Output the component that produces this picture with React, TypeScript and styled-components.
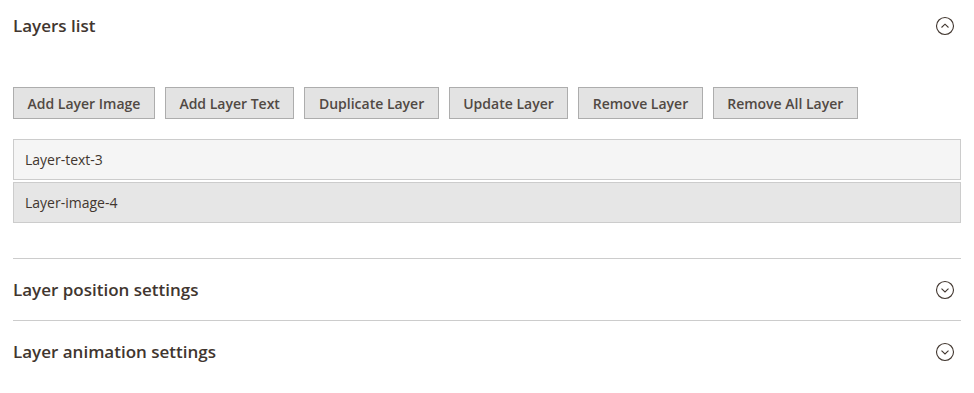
import { FC, useState } from 'react';
import styled, { createGlobalStyle } from 'styled-components';

const GlobalStyle = createGlobalStyle`
  body {
    margin: 0;
    background: #ffffff;
    font-family: "Open Sans", "Noto Sans", sans-serif;
  }
`;

const Page = styled.div`
  padding: 0 13px;
  display: flex;
  flex-direction: column;
`;

const Section = styled.section<{ $first?: boolean }>`
  border-top: ${({ $first }) => ($first ? 'none' : '1px solid #cccccc')};
`;

const SectionHeader = styled.div<{ $first?: boolean }>`
  height: ${({ $first }) => ($first ? '51px' : '61px')};
  display: flex;
  align-items: center;
  justify-content: space-between;
  cursor: pointer;
`;

const SectionTitle = styled.h2`
  margin: 0;
  font-size: 17px;
  font-weight: 600;
  color: #41362f;
`;

const ToggleIcon = styled.span`
  width: 20px;
  height: 20px;
  margin-right: 6px;
  display: flex;
  align-items: center;
  justify-content: center;
  color: #41362f;
`;

const SectionBody = styled.div`
  padding: 36px 0 35px;
  display: flex;
  flex-direction: column;
  gap: 20px;
`;

const Toolbar = styled.div`
  display: flex;
  gap: 10px;
`;

const Button = styled.button`
  height: 32px;
  padding: 0 13.5px;
  background: #e3e3e3;
  border: 1px solid #adadad;
  border-radius: 0;
  color: #514943;
  font-family: "Open Sans", "Noto Sans", sans-serif;
  font-size: 14px;
  font-weight: 600;
  cursor: pointer;
`;

const LayerList = styled.ul`
  list-style: none;
  margin: 0;
  padding: 0;
  display: flex;
  flex-direction: column;
  gap: 2px;
`;

const LayerRow = styled.li<{ $selected?: boolean }>`
  height: 41px;
  box-sizing: border-box;
  padding: 0 11px;
  display: flex;
  align-items: center;
  background: ${({ $selected }) => ($selected ? '#e6e6e6' : '#f5f5f5')};
  border: 1px solid #cccccc;
  color: #41362f;
  font-size: 14px;
`;

const Chevron: FC<{ open: boolean }> = ({ open }) => (
  <ToggleIcon>
    <svg width="20" height="20" viewBox="0 0 20 20" fill="none" stroke="currentColor">
      <circle cx="10" cy="10" r="8.5" strokeWidth="1.1" />
      {open ? (
        <path d="M6.5 11.5 L10 8.2 L13.5 11.5" strokeWidth="1.1" />
      ) : (
        <path d="M6.5 8.7 L10 12 L13.5 8.7" strokeWidth="1.1" />
      )}
    </svg>
  </ToggleIcon>
);

const buttons = [
  'Add Layer Image',
  'Add Layer Text',
  'Duplicate Layer',
  'Update Layer',
  'Remove Layer',
  'Remove All Layer',
];

const layers = ['Layer-text-3', 'Layer-image-4'];

const App: FC = () => {
  const [selected, setSelected] = useState(1);

  return (
    <>
      <GlobalStyle />
      <Page>
        <Section $first>
          <SectionHeader $first>
            <SectionTitle>Layers list</SectionTitle>
            <Chevron open />
          </SectionHeader>
          <SectionBody>
            <Toolbar>
              {buttons.map((label) => (
                <Button key={label}>{label}</Button>
              ))}
            </Toolbar>
            <LayerList>
              {layers.map((name, i) => (
                <LayerRow key={name} $selected={i === selected} onClick={() => setSelected(i)}>
                  {name}
                </LayerRow>
              ))}
            </LayerList>
          </SectionBody>
        </Section>
        <Section>
          <SectionHeader>
            <SectionTitle>Layer position settings</SectionTitle>
            <Chevron open={false} />
          </SectionHeader>
        </Section>
        <Section>
          <SectionHeader>
            <SectionTitle>Layer animation settings</SectionTitle>
            <Chevron open={false} />
          </SectionHeader>
        </Section>
      </Page>
    </>
  );
};

export default App;
